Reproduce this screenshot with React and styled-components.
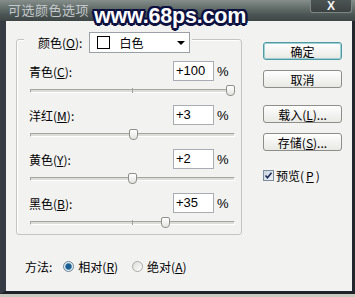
import styled, { createGlobalStyle } from "styled-components";

const GlobalStyle = createGlobalStyle`
  html, body { margin: 0; padding: 0; }
  body {
    background: #2a2c30;
    font-family: "Noto Sans CJK SC", "Liberation Sans", sans-serif;
    color: #000;
  }
`;

const Screen = styled.div`
  position: relative;
  width: 355px;
  height: 297px;
  overflow: hidden;
  display: flex;
  flex-direction: column;
  background: #c9c9c2;
`;

const TitleBar = styled.div`
  flex: none;
  height: 21px;
  display: flex;
  justify-content: space-between;
  align-items: flex-start;
  padding: 0 3px 0 8px;
  background: linear-gradient(to bottom, #858e8b 0%, #66706d 35%, #4b5553 70%, #3e4645 100%);
`;

const Title = styled.span`
  font-size: 13px;
  line-height: 19px;
  color: #c3c8cc;
  letter-spacing: 0.5px;
`;

const CloseBox = styled.div`
  width: 40px;
  height: 12px;
  border: 1px solid #7d8683;
  border-top: none;
  border-radius: 0 0 3px 3px;
  background: linear-gradient(to bottom, #4c5453, #3a4140);
  display: flex;
  align-items: center;
  justify-content: center;
  color: #f4f4f4;
  font: bold 12px "Liberation Sans", sans-serif;
`;

const Watermark = styled.div`
  position: absolute;
  left: 94px;
  top: 3px;
  font: bold 21.5px/26px "Liberation Sans", sans-serif;
  color: #ffffff;
  letter-spacing: -0.2px;
  text-shadow:
    2.5px 0 0 #0c1140, -2.5px 0 0 #0c1140, 0 2.5px 0 #0c1140, 0 -2.5px 0 #0c1140,
    1.8px 1.8px 0 #0c1140, -1.8px 1.8px 0 #0c1140, 1.8px -1.8px 0 #0c1140, -1.8px -1.8px 0 #0c1140;
`;

const Frame = styled.div`
  flex: none;
  height: 273px;
  box-sizing: border-box;
  display: flex;
  border-left: 6px solid #363b44;
  border-right: 3px solid #23262d;
  border-bottom: 3px solid #1f2228;
`;

const Body = styled.div`
  flex: 1;
  display: flex;
  gap: 21px;
  padding: 18px 0 0 10px;
  background: #f2f2f1;
  font-size: 12px;
`;

const LeftCol = styled.div`
  width: 226px;
  display: flex;
  flex-direction: column;
`;

const Group = styled.div`
  border: 1px solid #c4c4c0;
  border-radius: 3px;
  box-shadow: inset 1px 1px 0 #ffffff;
  padding: 0 9px 5px 12px;
  display: flex;
  flex-direction: column;
`;

const Header = styled.div`
  align-self: flex-start;
  margin: -8px 0 0 -5px;
  padding: 0 2px 0 14px;
  height: 21px;
  display: flex;
  align-items: center;
  gap: 7px;
  background: #f2f2f1;
`;

const U = styled.span`
  text-decoration: underline;
`;

const Select = styled.div`
  width: 101px;
  height: 21px;
  box-sizing: border-box;
  border: 1px solid #9aa0a6;
  background: #fff;
  display: flex;
  align-items: center;
  padding: 0 4px 0 7px;
`;

const Swatch = styled.span`
  width: 11px;
  height: 11px;
  border: 1px solid #000;
  background: ${(p) => p.$color};
  margin-right: 9px;
`;

const Arrow = styled.span`
  margin-left: auto;
  width: 0;
  height: 0;
  border-left: 4px solid transparent;
  border-right: 4px solid transparent;
  border-top: 4px solid #000;
`;

const Row = styled.div`
  margin-top: 8px;
  display: flex;
  align-items: center;
  height: 20px;
`;

const Label = styled.span`
  flex: 1;
`;

const ValueBox = styled.div`
  width: 41px;
  height: 20px;
  box-sizing: border-box;
  border: 1px solid #a9adb3;
  background: #fff;
  padding-left: 2px;
  font: 13px/18px "Liberation Sans", sans-serif;
`;

const Pct = styled.span`
  width: 15px;
  padding-left: 3px;
  font: 13px "Liberation Sans", sans-serif;
`;

const SliderWrap = styled.div`
  position: relative;
  height: 12px;
  margin: 4px -3px 0 1px;
  display: flex;
  align-items: center;
`;

const Track = styled.div`
  flex: 1;
  height: 2px;
  border: 1px solid #a4a4a0;
  border-bottom-color: #ffffff;
  border-right-color: #ffffff;
  background: #dcdcd8;
  border-radius: 1px;
  display: flex;
  justify-content: center;
`;

const Tick = styled.span`
  width: 1px;
  height: 5px;
  margin-top: -2px;
  background: #a0a09c;
`;

const Thumb = styled.div`
  position: absolute;
  top: 0;
  width: 9px;
  height: 11px;
  box-sizing: border-box;
  border: 1px solid #8f8f8b;
  border-radius: 2px 2px 4px 4px;
  background: linear-gradient(to bottom, #ffffff, #e3e3df);
`;

const MethodRow = styled.div`
  margin-top: 23px;
  padding-left: 9px;
  height: 16px;
  display: flex;
  align-items: center;
`;

const Radio = styled.span`
  width: 11px;
  height: 11px;
  box-sizing: border-box;
  border-radius: 50%;
  border: 1px solid ${(p) => (p.$on ? "#6f8496" : "#a9a9a6")};
  background: ${(p) =>
    p.$on
      ? "radial-gradient(circle, #1b5d8e 0 2.5px, #6fa4c8 3.2px, #e9eef2 3.8px, #dfe4e8 100%)"
      : "linear-gradient(to bottom right, #dcdcd8, #ffffff)"};
  margin-right: 4px;
`;

const RadioGroup = styled.div`
  display: flex;
  align-items: center;
  margin-left: ${(p) => p.$gap}px;
`;

const RightCol = styled.div`
  width: 79px;
  padding-top: 3px;
  display: flex;
  flex-direction: column;
`;

const Button = styled.div`
  height: 18px;
  box-sizing: border-box;
  margin-top: ${(p) => p.$gap || 0}px;
  border: 1px solid ${(p) => (p.$default ? "#4f9aa4" : "#8d8d8a")};
  box-shadow: ${(p) => (p.$default ? "inset 0 0 0 1px #9fd0d4" : "none")};
  border-radius: 3px;
  background: linear-gradient(to bottom, #ffffff, #e8e8e4);
  display: flex;
  align-items: center;
  justify-content: center;
  font-size: 12px;
`;

const Check = styled.label`
  margin-top: 16px;
  display: flex;
  align-items: center;
  gap: 2px;
  font-size: 12px;
`;

const Box = styled.span`
  width: 11px;
  height: 11px;
  box-sizing: border-box;
  border: 1px solid #7c8c9c;
  background: linear-gradient(to bottom right, #c8d4e0, #eef2f6);
  display: flex;
  align-items: center;
  justify-content: center;
`;

const inks = [
  { name: "青色", key: "C", value: 100 },
  { name: "洋红", key: "M", value: 3 },
  { name: "黄色", key: "Y", value: 2 },
  { name: "黑色", key: "B", value: 35 },
];

function InkRow({ ink }) {
  return (
    <>
      <Row>
        <Label>
          {ink.name}(<U>{ink.key}</U>):
        </Label>
        <ValueBox>+{ink.value}</ValueBox>
        <Pct>%</Pct>
      </Row>
      <SliderWrap>
        <Track>
          <Tick />
        </Track>
        <Thumb style={{ left: 96 + ink.value }} />
      </SliderWrap>
    </>
  );
}

export default function App() {
  return (
    <>
      <GlobalStyle />
      <Screen>
        <TitleBar>
          <Title>可选颜色选项</Title>
          <CloseBox>X</CloseBox>
        </TitleBar>
        <Frame>
          <Body>
            <LeftCol>
              <Group>
                <Header>
                  <span>
                    颜色(<U>O</U>):
                  </span>
                  <Select>
                    <Swatch $color="#fff" />
                    白色
                    <Arrow />
                  </Select>
                </Header>
                {inks.map((ink) => (
                  <InkRow key={ink.key} ink={ink} />
                ))}
              </Group>
              <MethodRow>
                方法:
                <RadioGroup $gap={11}>
                  <Radio $on />
                  相对(<U>R</U>)
                </RadioGroup>
                <RadioGroup $gap={14}>
                  <Radio />
                  绝对(<U>A</U>)
                </RadioGroup>
              </MethodRow>
            </LeftCol>
            <RightCol>
              <Button $default>确定</Button>
              <Button $gap={10}>取消</Button>
              <Button $gap={17}>
                载入(<U>L</U>)...
              </Button>
              <Button $gap={10}>
                存储(<U>S</U>)...
              </Button>
              <Check>
                <Box>
                  <svg width="9" height="9" viewBox="0 0 9 9">
                    <path d="M1.5 4.5 L3.5 6.8 L7.5 1.8" fill="none" stroke="#1c2a5a" strokeWidth="1.6" />
                  </svg>
                </Box>
                预览(<U>P</U>)
              </Check>
            </RightCol>
          </Body>
        </Frame>
        <Watermark>www.68ps.com</Watermark>
      </Screen>
    </>
  );
}
